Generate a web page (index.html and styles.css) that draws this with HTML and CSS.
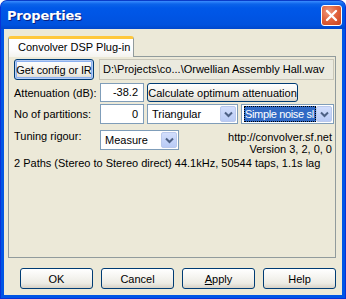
FILE: index.html
```html
<!DOCTYPE html>
<html>
<head>
<meta charset="utf-8">
<link rel="stylesheet" href="styles.css">
</head>
<body>
<div class="window">
  <div class="titlebar">
    <span class="title">Properties</span>
    <span class="close">
      <svg width="13" height="13" viewBox="0 0 13 13"><path d="M2 2 L11 11 M11 2 L2 11" stroke="#fff" stroke-width="2.4" stroke-linecap="round"/></svg>
    </span>
  </div>
  <div class="client">
    <div class="tabs">
      <div class="tab">Convolver DSP Plug-in</div>
    </div>
    <div class="panel">
      <div class="row r1">
        <button class="btn getcfg">Get config or IR</button>
        <div class="pathfield">D:\Projects\co...\Orwellian Assembly Hall.wav</div>
      </div>
      <div class="row r2">
        <span class="label">Attenuation (dB):</span>
        <div class="edit">-38.2</div>
        <button class="btn calc">Calculate optimum attenuation</button>
      </div>
      <div class="row r3">
        <span class="label">No of partitions:</span>
        <div class="edit">0</div>
        <div class="combo tri"><span class="ctext">Triangular</span><span class="arrow"><svg width="9" height="7" viewBox="0 0 9 7"><path d="M1 1.5 L4.5 5 L8 1.5" stroke="#4D6185" stroke-width="2" fill="none"/></svg></span></div>
        <div class="combo noise"><span class="ctext"><span class="sel">Simple noise sl</span></span><span class="arrow"><svg width="9" height="7" viewBox="0 0 9 7"><path d="M1 1.5 L4.5 5 L8 1.5" stroke="#4D6185" stroke-width="2" fill="none"/></svg></span></div>
      </div>
      <div class="row r4">
        <span class="label">Tuning rigour:</span>
        <div class="combo measure"><span class="ctext">Measure</span><span class="arrow"><svg width="9" height="7" viewBox="0 0 9 7"><path d="M1 1.5 L4.5 5 L8 1.5" stroke="#4D6185" stroke-width="2" fill="none"/></svg></span></div>
        <div class="info">
          <div>http://convolver.sf.net</div>
          <div>Version 3, 2, 0, 0</div>
        </div>
      </div>
      <div class="status">2 Paths (Stereo to Stereo direct) 44.1kHz, 50544 taps, 1.1s lag</div>
    </div>
    <div class="buttons">
      <button class="btn dlg">OK</button>
      <button class="btn dlg">Cancel</button>
      <button class="btn dlg"><u>A</u>pply</button>
      <button class="btn dlg">Help</button>
    </div>
  </div>
</div>
</body>
</html>
```
FILE: styles.css
```css
* { box-sizing: border-box; }
html, body { margin: 0; padding: 0; background: #fff; }
body { font-family: "Liberation Sans", Arial, sans-serif; font-size: 11px; color: #000; white-space: nowrap; }

.window {
  width: 346px;
  height: 299px;
  display: flex;
  flex-direction: column;
  background: #0055E5;
  border-radius: 7px 7px 0 0;
  border: 1px solid #0831D9;
  border-top-color: #0A3CC8;
}

.titlebar {
  height: 28px;
  flex: none;
  display: flex;
  align-items: center;
  justify-content: space-between;
  padding: 0 3px 0 6px;
  border-radius: 6px 6px 0 0;
  background: linear-gradient(#3A8DFF 0, #0C64EA 3px, #0058E8 7px, #0055E5 50%, #0052DE 85%, #0047CC 100%);
}
.title {
  color: #fff;
  font-weight: bold;
  font-size: 13px;
  font-family: "DejaVu Sans", "Liberation Sans", sans-serif;
  letter-spacing: -0.2px;
  text-shadow: 1px 1px 0 #0A1F80;
  padding-top: 1px;
}
.close {
  width: 21px;
  height: 21px;
  border: 1px solid #fff;
  border-radius: 3px;
  background: radial-gradient(circle at 35% 30%, #EE9A80 0, #E2653F 45%, #C9411B 100%);
  display: flex;
  align-items: center;
  justify-content: center;
  margin-top: 1px;
}

.client {
  flex: 1;
  margin: 0 3px 3px 3px;
  background: #ECE9D8;
  padding: 7px 6px 0 4px;
  display: flex;
  flex-direction: column;
}

.tabs { display: flex; height: 20px; }
.tab {
  width: 126px;
  height: 21px;
  background: linear-gradient(#FFFFFF, #FCFCFE 60%, #F4F3EE);
  border: 1px solid #919B9C;
  border-bottom: none;
  border-top: 3px solid #FFC83C;
  border-radius: 3px 3px 0 0;
  padding: 1px 0 0 9px;
  font-size: 11px;
  position: relative;
  z-index: 1;
  line-height: 14px;
}

.panel {
  height: 202px;
  border: 1px solid #919B9C;
  background: #ECE9D8;
  padding: 2px 1px 0 5px;
  display: flex;
  flex-direction: column;
}

.row { display: flex; align-items: center; }
.r1 { height: 21px; gap: 5px; }
.r2 { height: 19px; margin-top: 3px; }
.r3 { height: 20px; margin-top: 2px; }
.r4 { height: 20px; margin-top: 6px; align-items: flex-start; }

.label { width: 86px; flex: none; }

.btn {
  font-family: "Liberation Sans", Arial, sans-serif;
  font-size: 11px;
  color: #000;
  border: 1px solid #003C74;
  border-radius: 3px;
  background: linear-gradient(#FFFFFF 0, #F6F5F1 40%, #ECEBE4 75%, #D8D2C6 100%);
  padding: 0;
  margin: 0;
  white-space: nowrap;
  overflow: hidden;
}
.getcfg {
  width: 81px;
  height: 21px;
  letter-spacing: -0.1px;
  box-shadow: inset 0 0 0 1px #B5CCF4, inset 0 0 0 2px #8DB2F0;
}
.pathfield {
  flex: none;
  width: 235px;
  height: 21px;
  border: 1px solid #C9C7BA;
  background: #EBEADF;
  padding: 0 3px;
  line-height: 19px;
  overflow: hidden;
  font-size: 11px;
}
.edit {
  width: 44px;
  height: 19px;
  border: 1px solid #7F9DB9;
  background: #fff;
  text-align: right;
  padding-right: 5px;
  line-height: 17px;
  flex: none;
}
.r3 .edit { height: 20px; line-height: 18px; }
.calc { width: 151px; height: 19px; margin-left: 3px; }

.combo {
  height: 20px;
  border: 1px solid #7F9DB9;
  background: #fff;
  display: flex;
  align-items: stretch;
  flex: none;
  padding: 1px;
}
.ctext { flex: 1; padding-left: 3px; line-height: 16px; overflow: hidden; }
.arrow {
  width: 16px;
  flex: none;
  border: 1px solid #BAC9EC;
  border-radius: 2px;
  background: linear-gradient(#D2DEFC, #B9CBF5);
  display: flex;
  align-items: center;
  justify-content: center;
}
.tri { width: 91px; margin-left: 3px; }
.noise { width: 93px; margin-left: 3px; }
.noise .ctext { padding-left: 1px; }
.sel {
  display: block;
  background: #316AC5;
  color: #fff;
  outline: 1px dotted #000;
  outline-offset: -1px;
  padding-left: 1px;
  line-height: 16px;
  letter-spacing: -0.35px;
  overflow: hidden;
}
.measure { width: 79px; }
.info {
  flex: 1;
  text-align: right;
  line-height: 12px;
  padding-right: 2px;
  padding-top: 1px;
}

.status { margin-top: 7px; }

.buttons {
  display: flex;
  justify-content: flex-end;
  gap: 8px;
  margin-top: 10px;
}
.dlg { width: 73px; height: 21px; }
.dlg u { text-decoration: underline; }
```
